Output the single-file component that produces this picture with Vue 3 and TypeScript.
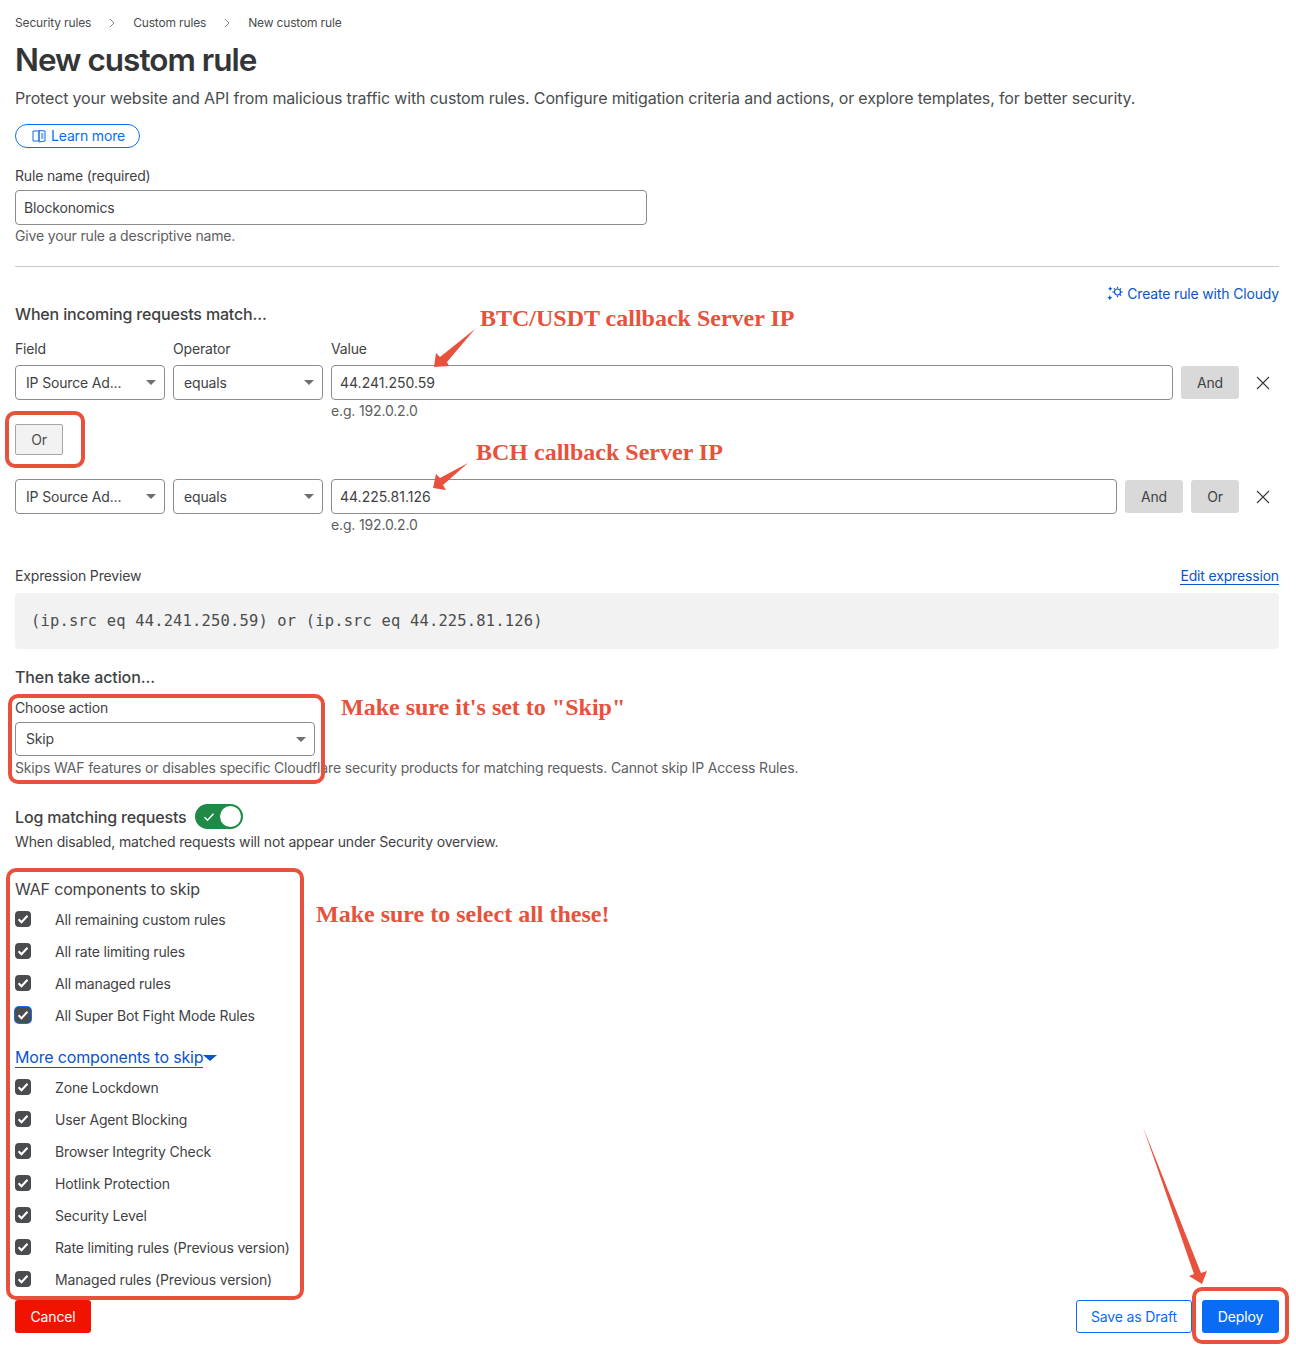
<script setup lang="ts">
const crumbs = ['Security rules', 'Custom rules', 'New custom rule']
const wafRows = [
  { label: 'All remaining custom rules', focus: false },
  { label: 'All rate limiting rules', focus: false },
  { label: 'All managed rules', focus: false },
  { label: 'All Super Bot Fight Mode Rules', focus: true },
]
const moreRows = [
  'Zone Lockdown',
  'User Agent Blocking',
  'Browser Integrity Check',
  'Hotlink Protection',
  'Security Level',
  'Rate limiting rules (Previous version)',
  'Managed rules (Previous version)',
]
</script>

<template>
  <div class="page">
    <nav class="crumbs">
      <template v-for="(c, i) in crumbs" :key="c">
        <span>{{ c }}</span>
        <svg v-if="i < crumbs.length - 1" class="chev" width="6" height="10" viewBox="0 0 6 10"><path d="M1 1l4 4-4 4" fill="none" stroke="#797979" stroke-width="0.9" /></svg>
      </template>
    </nav>
    <h1 class="title">New custom rule</h1>
    <p class="desc">Protect your website and API from malicious traffic with custom rules. Configure mitigation criteria and actions, or explore templates, for better security.</p>
    <a class="learn">
      <svg width="14" height="14" viewBox="0 0 14 14" fill="none" stroke="#0a6cf5" stroke-width="1"><path d="M7 2H1v10h6zM7 1.5l6 .5v10l-6 1zM9 5h2.5M9 7h2.5M9 9h2.5" /></svg>
      Learn more
    </a>

    <div class="label name-label">Rule name (required)</div>
    <div class="input name-input">Blockonomics</div>
    <div class="hint h2">Give your rule a descriptive name.</div>
    <hr class="rule" />

    <div class="cloudy-row">
      <a class="cloudy">
        <svg width="16" height="16" viewBox="0 0 16 16" fill="none" stroke="#0a55c9" stroke-width="1.2"><circle cx="10.5" cy="6" r="3" /><path d="M10.5 .8v1.8M10.5 9.4v1.8M5.3 6h1.8M13.9 6h1.8M6.9 2.4l1.2 1.2M12.9 8.4l1.2 1.2M14.1 2.4l-1.2 1.2" /><path d="M3.2 0.5l.7 1.5 1.5.7-1.5.7-.7 1.5-.7-1.5L1 2.7l1.5-.7zM2.8 9l.8 1.9 1.9.8-1.9.8-.8 1.9-.8-1.9-1.9-.8 1.9-.8z" fill="#0a55c9" stroke="none" /></svg>
        Create rule with Cloudy
      </a>
    </div>
    <h2 class="heading when">When incoming requests match...</h2>

    <div class="cols labels">
      <div class="label c-field">Field</div>
      <div class="label c-op">Operator</div>
      <div class="label">Value</div>
    </div>
    <div class="cols row1">
      <div class="select c-field"><span>IP Source Ad...</span><i class="caret"></i></div>
      <div class="select c-op"><span>equals</span><i class="caret"></i></div>
      <div class="input value">44.241.250.59</div>
      <button class="btn-grey and">And</button>
      <button class="close" aria-label="Remove"><svg width="14" height="14" viewBox="0 0 14 14"><path d="M1 1l12 12M13 1L1 13" stroke="#36393a" stroke-width="1.1" fill="none" /></svg></button>
    </div>
    <div class="cols eg"><div class="c-field"></div><div class="c-op"></div><div class="hint">e.g. 192.0.2.0</div></div>
    <button class="or-btn">Or</button>
    <div class="cols row2">
      <div class="select c-field"><span>IP Source Ad...</span><i class="caret"></i></div>
      <div class="select c-op"><span>equals</span><i class="caret"></i></div>
      <div class="input value">44.225.81.126</div>
      <button class="btn-grey and">And</button>
      <button class="btn-grey or">Or</button>
      <button class="close" aria-label="Remove"><svg width="14" height="14" viewBox="0 0 14 14"><path d="M1 1l12 12M13 1L1 13" stroke="#36393a" stroke-width="1.1" fill="none" /></svg></button>
    </div>
    <div class="cols eg"><div class="c-field"></div><div class="c-op"></div><div class="hint">e.g. 192.0.2.0</div></div>

    <div class="expr-head">
      <span class="label">Expression Preview</span>
      <a class="edit">Edit expression</a>
    </div>
    <div class="code">(ip.src eq 44.241.250.59) or (ip.src eq 44.225.81.126)</div>

    <h2 class="heading then">Then take action...</h2>
    <div class="label choose">Choose action</div>
    <div class="select action"><span>Skip</span><i class="caret"></i></div>
    <div class="hint skip-hint">Skips WAF features or disables specific Cloudflare security products for matching requests. Cannot skip IP Access Rules.</div>

    <div class="log">
      <span class="heading">Log matching requests</span>
      <span class="toggle">
        <svg width="12" height="10" viewBox="0 0 12 10"><path d="M1.5 5.2l3 3 6-6.4" fill="none" stroke="#fff" stroke-width="1.4" /></svg>
        <i class="knob"></i>
      </span>
    </div>
    <div class="hint disabled">When disabled, matched requests will not appear under Security overview.</div>

    <div class="waf">WAF components to skip</div>
    <div class="checks c1">
      <div v-for="r in wafRows" :key="r.label" class="check">
        <span class="box" :class="{ focus: r.focus }"><svg width="12" height="10" viewBox="0 0 12 10"><path d="M1.5 5.2l3 3 6-6.4" fill="none" stroke="#fff" stroke-width="2" /></svg></span>
        <span>{{ r.label }}</span>
      </div>
    </div>
    <div class="more"><a>More components to skip</a><i class="more-caret"></i></div>
    <div class="checks c2">
      <div v-for="r in moreRows" :key="r" class="check">
        <span class="box"><svg width="12" height="10" viewBox="0 0 12 10"><path d="M1.5 5.2l3 3 6-6.4" fill="none" stroke="#fff" stroke-width="2" /></svg></span>
        <span>{{ r }}</span>
      </div>
    </div>

    <footer class="footer">
      <button class="cancel">Cancel</button>
      <div class="right">
        <button class="draft">Save as Draft</button>
        <button class="deploy">Deploy</button>
      </div>
    </footer>

    <!-- Annotations drawn over the screenshot -->
    <div class="note n1">BTC/USDT callback Server IP</div>
    <div class="note n2">BCH callback Server IP</div>
    <div class="note n3">Make sure it's set to "Skip"</div>
    <div class="note n4">Make sure to select all these!</div>
    <div class="mark m1"></div>
    <div class="mark m2"></div>
    <div class="mark m3"></div>
    <div class="mark m4"></div>
    <svg class="arrows" width="1296" height="1345" viewBox="0 0 1296 1345">
      <polygon points="475,329 447,362 449,366 434,367 436,353 440,357" fill="#e8513c" />
      <polygon points="468,463 443,485 446,490 433,488 436,474 440,478" fill="#e8513c" />
      <polygon points="1143,1127 1201,1273 1207,1271 1202,1284 1189,1276 1194,1274" fill="#e8513c" />
    </svg>
  </div>
</template>

<style>
html, body { margin: 0; background: #fff; }
</style>

<style scoped>
.page {
  position: relative;
  box-sizing: border-box;
  width: 1296px;
  height: 1345px;
  overflow: hidden;
  padding: 14px 17px 0 15px;
  font-family: Inter, "Liberation Sans", sans-serif;
  font-size: 14px;
  line-height: 18px;
  letter-spacing: -0.16px;
  color: #3f4243;
  background: #fff;
}
.crumbs { display: flex; align-items: center; height: 18px; font-size: 12px; color: #4a4d4e; }
.chev { margin: 0 18px; }
.title { margin: 8px 0 0; font-size: 31.5px; line-height: 40px; font-weight: 600; letter-spacing: -1px; color: #333536; }
.desc { margin: 8px 0 0; font-size: 16px; line-height: 20px; color: #4a4d4e; }
.learn {
  box-sizing: border-box; display: inline-flex; align-items: center; gap: 5px;
  margin-top: 16px; height: 24px; padding: 0 14px 0 16px;
  border: 1px solid #0a6cf5; border-radius: 12px; color: #0a6cf5;
  vertical-align: top;
}
.label { color: #3f4243; }
.name-label { margin-top: 19px; }
.input {
  box-sizing: border-box; display: flex; align-items: center; height: 35px; padding: 0 8px;
  border: 1px solid #8a8d8e; border-radius: 4px; background: #fff; color: #3f4243; letter-spacing: 0;
}
.name-input { margin-top: 5px; width: 632px; letter-spacing: -0.16px; }
.hint { color: #5d6061; }
.h2 { margin-top: 2px; }
.rule { margin: 21px 0 0; border: 0; border-top: 1px solid #c8c9ca; height: 0; }
.cloudy-row { display: flex; justify-content: flex-end; margin-top: 18px; }
.cloudy { display: inline-flex; align-items: center; gap: 4px; color: #0a55c9; }
.heading { margin: 0; font-size: 16px; line-height: 18px; font-weight: 500; color: #3f4243; }
.when { margin-top: 2px; }
.cols { display: flex; gap: 8px; align-items: center; }
.labels { margin-top: 17px; }
.c-field, .c-op { width: 150px; flex: none; }
.select {
  box-sizing: border-box; display: flex; align-items: center; justify-content: space-between;
  height: 35px; padding: 0 8px 0 10px; border: 1px solid #8a8d8e; border-radius: 4px; color: #3f4243;
}
.caret { width: 0; height: 0; border: 5px solid transparent; border-top: 5px solid #6d7071; border-bottom: 0; }
.row1 { margin-top: 7px; }
.row2 { margin-top: 24px; }
.value { flex: 1; }
.eg { margin-top: 2px; }
.btn-grey {
  height: 33px; padding: 0; border: 0; border-radius: 3px; background: #d9d9d9;
  font: inherit; letter-spacing: inherit; color: #3f4243; flex: none;
}
.and { width: 58px; }
.or { width: 48px; }
.close {
  display: flex; align-items: center; justify-content: center;
  width: 32px; height: 33px; padding: 0; border: 0; background: none; flex: none;
}
.or-btn {
  display: block; box-sizing: border-box; margin-top: 4px; width: 48px; height: 31px; padding: 0;
  border: 1px solid #a3a5a6; border-radius: 2px; background: #f2f2f2; font: inherit; letter-spacing: inherit; color: #4a4d4e;
}
.expr-head { display: flex; justify-content: space-between; margin-top: 33px; }
.edit { color: #0a55c9; border-bottom: 1px solid #0a55c9; line-height: 17px; height: 17px; }
.code {
  box-sizing: border-box; display: flex; align-items: center; margin-top: 8px; height: 56px; padding: 0 16px;
  background: #f2f2f2; border-radius: 4px; font-family: "DejaVu Sans Mono", monospace; font-size: 15.45px; letter-spacing: 0.18px; color: #4a4d4e;
}
.then { margin-top: 19px; letter-spacing: -0.1px; }
.choose { margin-top: 13px; }
.action { margin-top: 5px; width: 300px; height: 34px; }
.skip-hint { margin-top: 3px; }
.log { display: flex; align-items: center; gap: 8px; margin-top: 27px; height: 25px; }
.toggle {
  position: relative; box-sizing: border-box; display: flex; align-items: center; width: 48px; height: 25px;
  padding-left: 8px; border-radius: 13px; background: #1f8a48;
}
.knob { position: absolute; right: 2px; top: 2px; width: 21px; height: 21px; border-radius: 50%; background: #fff; }
.disabled { margin-top: 4px; color: #3f4243; }
.waf { margin-top: 28px; font-size: 16px; line-height: 20px; color: #3f4243; }
.c1 { margin-top: 5px; }
.c2 { margin-top: 4px; }
.check { display: flex; align-items: center; height: 32px; }
.box {
  box-sizing: border-box; display: flex; align-items: center; justify-content: center;
  width: 16px; height: 16px; margin: 0 24px 2px 0; border-radius: 4px; background: #4a4d4e;
}
.box.focus { box-shadow: 0 0 0 1px #1a6ff0; }
.more { display: flex; align-items: center; margin-top: 16px; height: 20px; font-size: 16px; color: #0a55c9; }
.more a { border-bottom: 1px solid #0a55c9; line-height: 19px; height: 20px; box-sizing: border-box; }
.more-caret { width: 0; height: 0; border: 7px solid transparent; border-top: 6px solid #0a55c9; border-bottom: 0; }
.footer { display: flex; justify-content: space-between; margin-top: 4px; }
.right { display: flex; gap: 10px; }
.footer button { box-sizing: border-box; height: 33px; padding: 0; border-radius: 3px; font: inherit; letter-spacing: inherit; }
.cancel { width: 76px; border: 0; background: #f01400; color: #fff; }
.draft { width: 116px; border: 1px solid #0a6cf5 !important; background: #fff; color: #0a6cf5; }
.deploy { width: 77px; border: 0; background: #0a6cf5; color: #fff; }

.note {
  position: absolute; white-space: nowrap; font-family: "Liberation Serif", serif; font-weight: 700;
  font-size: 24px; line-height: 30px; letter-spacing: 0; color: #e8513c;
}
.n1 { left: 480px; top: 303px; }
.n2 { left: 476px; top: 437px; }
.n3 { left: 341px; top: 692px; }
.n4 { left: 316px; top: 899px; }
.mark { position: absolute; box-sizing: border-box; border: 4px solid #e8513c; border-radius: 10px; }
.m1 { left: 5px; top: 411px; width: 80px; height: 57px; }
.m2 { left: 8px; top: 694px; width: 317px; height: 90px; }
.m3 { left: 6px; top: 868px; width: 298px; height: 432px; }
.m4 { left: 1192px; top: 1287px; width: 97px; height: 57px; }
.arrows { position: absolute; left: 0; top: 0; pointer-events: none; }
</style>
